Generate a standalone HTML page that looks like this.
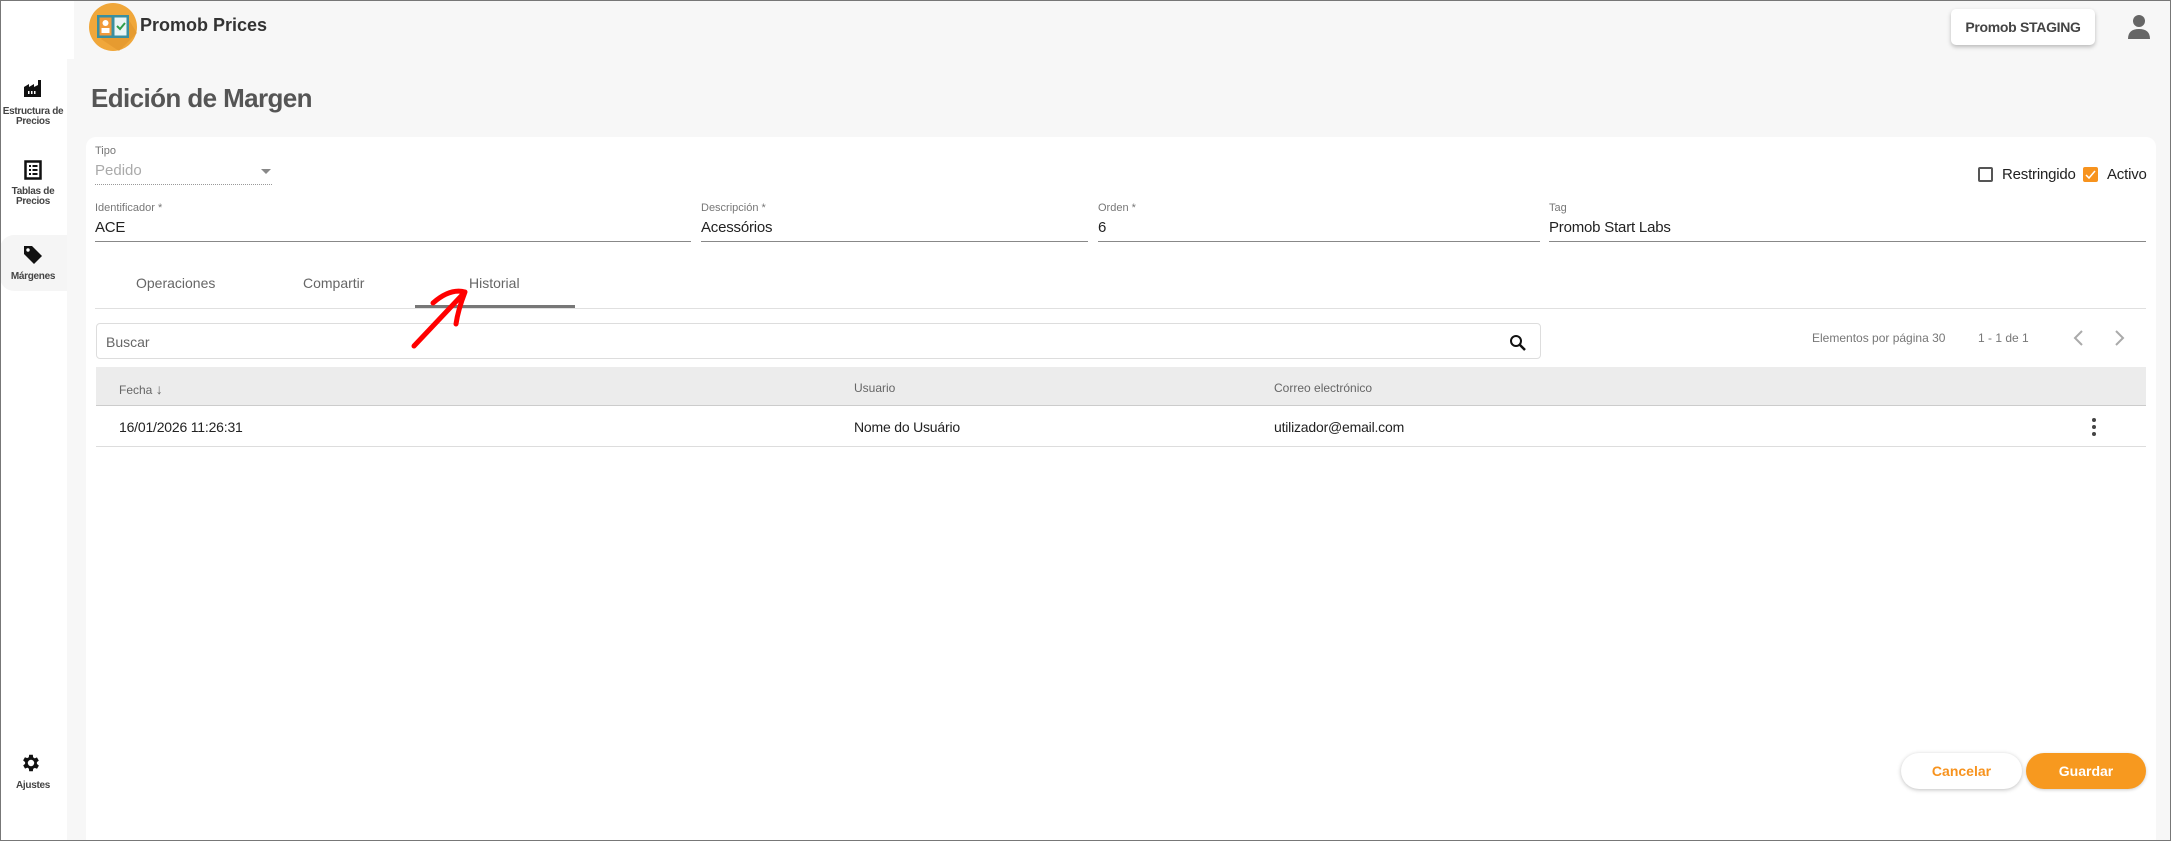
<!DOCTYPE html>
<html><head><meta charset="utf-8"><style>
*{box-sizing:border-box;margin:0;padding:0}
body{width:2171px;height:841px;overflow:hidden;background:#f7f7f7;font-family:"Liberation Sans",Arial,sans-serif;position:relative}
.frame{position:absolute;left:0;top:0;width:2171px;height:841px;border:1px solid #777;z-index:50;pointer-events:none}
.abs{position:absolute}
.side{left:0;top:0;width:67px;height:841px;background:#fff}
.sideTop{left:0;top:0;width:74px;height:59px;background:#fff}
.sl{position:absolute;left:0;width:66px;text-align:center;font-size:10px;font-weight:bold;color:#444;line-height:10px;letter-spacing:-0.3px}
.card{left:86px;top:137px;width:2070px;height:704px;background:#fff;border-radius:10px 10px 0 0}
.lbl{position:absolute;font-size:11px;color:#777}
.val{position:absolute;font-size:15px;color:#222;letter-spacing:-0.2px}
.ul{position:absolute;height:1px;background:#888}
.tab{position:absolute;top:275px;font-size:14px;color:#666}
.th{position:absolute;top:381px;font-size:12px;color:#666}
.td{position:absolute;top:419px;font-size:14px;color:#222;letter-spacing:-0.2px}
</style></head><body>
<div class="frame"></div>
<div class="abs side"></div>
<div class="abs sideTop"></div>
<svg class="abs" style="left:89px;top:3px" width="48" height="48" viewBox="0 0 48 48">
<circle cx="24" cy="24" r="24" fill="#f0a73a"/>
<path d="M12 36 L30 48 L48 30 L38 14 Z" fill="#e0922a" opacity=".6"/>
<rect x="8" y="12" width="32" height="23" fill="#3a8fa0"/>
<rect x="10.5" y="14.5" width="12" height="18" fill="#f29a3a"/>
<rect x="25.5" y="14.5" width="12" height="18" fill="#eaf4f5"/>
<circle cx="16.5" cy="20" r="3" fill="#fff"/>
<rect x="12.5" y="25" width="8" height="5" fill="#fff"/>
<path d="M28 23 l3 3 l5 -6" stroke="#2e9e4a" stroke-width="2" fill="none"/>
</svg>
<div class="abs" style="left:140px;top:15px;font-size:18px;font-weight:bold;color:#333">Promob Prices</div>
<div class="abs" style="left:1951px;top:9px;width:144px;height:36px;background:#fff;border-radius:5px;box-shadow:0 2px 4px rgba(0,0,0,.25);font-size:14px;font-weight:bold;color:#444;text-align:center;line-height:36px;letter-spacing:-0.3px">Promob STAGING</div>
<svg class="abs" style="left:2127px;top:14px" width="24" height="26" viewBox="0 0 24 26"><circle cx="12" cy="7" r="6" fill="#666"/><path d="M1 25 Q1 15 12 15 Q23 15 23 25 Z" fill="#666"/></svg>

<svg class="abs" style="left:23px;top:78px" width="20" height="20" viewBox="0 0 20 20"><path d="M1 19 V9 l5 -3 v3 l5 -3 v3 l4 -2 V2 h3 v17 Z" fill="#111"/><rect x="5" y="13" width="1.5" height="3" fill="#fff"/><rect x="8" y="13" width="1.5" height="3" fill="#fff"/><rect x="11" y="13" width="1.5" height="3" fill="#fff"/></svg>
<div class="sl" style="top:107px">Estructura de<br>Precios</div>
<svg class="abs" style="left:24px;top:160px" width="18" height="20" viewBox="0 0 18 20"><rect x="1.5" y="1.5" width="15" height="17" fill="none" stroke="#111" stroke-width="2.5"/><rect x="5" y="5" width="2" height="2" fill="#111"/><rect x="8.5" y="5" width="5" height="2" fill="#111"/><rect x="5" y="9" width="2" height="2" fill="#111"/><rect x="8.5" y="9" width="5" height="2" fill="#111"/><rect x="5" y="13" width="2" height="2" fill="#111"/><rect x="8.5" y="13" width="5" height="2" fill="#111"/></svg>
<div class="sl" style="top:187px">Tablas de<br>Precios</div>
<div class="abs" style="left:0;top:235px;width:67px;height:56px;background:#f5f5f5;border-radius:14px 0 0 14px"></div>
<svg class="abs" style="left:22px;top:244px" width="22" height="22" viewBox="0 0 22 22"><path d="M2 2 h8 l10 10 l-8 8 l-10 -10 Z" fill="#111"/><circle cx="6" cy="6" r="1.7" fill="#fff"/></svg>
<div class="sl" style="top:272px">Márgenes</div>
<svg class="abs" style="left:20px;top:752px" width="22" height="22" viewBox="0 0 24 24"><path fill="#111" d="M19.4 13a7.5 7.5 0 000-2l2.1-1.6-2-3.5-2.5 1a7 7 0 00-1.7-1L15 3h-4l-.4 2.7a7 7 0 00-1.7 1l-2.5-1-2 3.5L6.6 11a7.5 7.5 0 000 2l-2.1 1.6 2 3.5 2.5-1a7 7 0 001.7 1L11 21h4l.4-2.7a7 7 0 001.7-1l2.5 1 2-3.5zM13 15.5a3.5 3.5 0 110-7 3.5 3.5 0 010 7z" transform="translate(-1 0)"/></svg>
<div class="sl" style="top:781px">Ajustes</div>

<div class="abs" style="left:91px;top:83px;font-size:26px;font-weight:bold;color:#555;letter-spacing:-0.6px">Edición de Margen</div>

<div class="abs card"></div>
<div class="lbl" style="left:95px;top:145px">Tipo</div>
<div class="abs" style="left:95px;top:162px;font-size:15px;color:#aaa">Pedido</div>
<div class="abs" style="left:261px;top:169px;width:0;height:0;border-left:5px solid transparent;border-right:5px solid transparent;border-top:5px solid #888"></div>
<div class="abs" style="left:95px;top:184px;width:177px;border-top:1px dotted #999"></div>

<div class="lbl" style="left:95px;top:202px">Identificador *</div>
<div class="val" style="left:95px;top:219px">ACE</div>
<div class="ul" style="left:95px;top:241px;width:596px"></div>
<div class="lbl" style="left:701px;top:202px">Descripción *</div>
<div class="val" style="left:701px;top:219px">Acessórios</div>
<div class="ul" style="left:701px;top:241px;width:387px"></div>
<div class="lbl" style="left:1098px;top:202px">Orden *</div>
<div class="val" style="left:1098px;top:219px">6</div>
<div class="ul" style="left:1098px;top:241px;width:442px"></div>
<div class="lbl" style="left:1549px;top:202px">Tag</div>
<div class="val" style="left:1549px;top:219px">Promob Start Labs</div>
<div class="ul" style="left:1549px;top:241px;width:597px"></div>

<div class="abs" style="left:1978px;top:167px;width:15px;height:15px;border:2px solid #555;border-radius:2px"></div>
<div class="val" style="left:2002px;top:166px">Restringido</div>
<div class="abs" style="left:2083px;top:167px;width:15px;height:15px;background:#f7931e;border-radius:2px"></div>
<svg class="abs" style="left:2083px;top:167px" width="15" height="15"><path d="M3 8 l3 3 l6 -7" stroke="#fff" stroke-width="1.5" fill="none"/></svg>
<div class="val" style="left:2107px;top:166px">Activo</div>

<div class="tab" style="left:136px">Operaciones</div>
<div class="tab" style="left:303px">Compartir</div>
<div class="tab" style="left:469px">Historial</div>
<div class="abs" style="left:95px;top:308px;width:2051px;height:1px;background:#e0e0e0"></div>
<div class="abs" style="left:415px;top:305px;width:160px;height:3px;background:#777"></div>

<div class="abs" style="left:96px;top:323px;width:1445px;height:36px;border:1px solid #ddd;border-radius:4px"></div>
<div class="abs" style="left:106px;top:334px;font-size:14px;color:#666">Buscar</div>
<svg class="abs" style="left:1509px;top:334px" width="18" height="18" viewBox="0 0 18 18"><circle cx="7" cy="7" r="5" fill="none" stroke="#111" stroke-width="2"/><path d="M11 11 l5 5" stroke="#111" stroke-width="2.5"/></svg>
<div class="abs" style="left:1812px;top:331px;font-size:12px;color:#777">Elementos por página 30</div>
<div class="abs" style="left:1978px;top:331px;font-size:12px;color:#777">1 - 1 de 1</div>
<svg class="abs" style="left:2072px;top:329px" width="14" height="18"><path d="M10 2 L3 9 L10 16" stroke="#aaa" stroke-width="2" fill="none"/></svg>
<svg class="abs" style="left:2112px;top:329px" width="14" height="18"><path d="M4 2 L11 9 L4 16" stroke="#aaa" stroke-width="2" fill="none"/></svg>

<div class="abs" style="left:96px;top:367px;width:2050px;height:39px;background:#ececec;border-bottom:1px solid #ccc"></div>
<div class="th" style="left:119px">Fecha <span style="font-size:14px">↓</span></div>
<div class="th" style="left:854px">Usuario</div>
<div class="th" style="left:1274px">Correo electrónico</div>
<div class="td" style="left:119px">16/01/2026 11:26:31</div>
<div class="td" style="left:854px">Nome do Usuário</div>
<div class="td" style="left:1274px">utilizador@email.com</div>
<svg class="abs" style="left:2090px;top:417px" width="8" height="20"><circle cx="4" cy="3" r="2" fill="#444"/><circle cx="4" cy="10" r="2" fill="#444"/><circle cx="4" cy="17" r="2" fill="#444"/></svg>
<div class="abs" style="left:96px;top:446px;width:2050px;height:1px;background:#ddd"></div>

<svg class="abs" style="left:400px;top:280px" width="90" height="80"><path d="M14 66 L65 12 M33 23 Q50 8 65 12 Q58 30 56 44" stroke="#f00" stroke-width="5" fill="none" stroke-linecap="round" stroke-linejoin="round"/></svg>

<div class="abs" style="left:1901px;top:753px;width:121px;height:36px;background:#fff;border-radius:18px;box-shadow:0 1px 4px rgba(0,0,0,.25);color:#f7931e;font-size:14px;font-weight:bold;text-align:center;line-height:36px">Cancelar</div>
<div class="abs" style="left:2026px;top:753px;width:120px;height:36px;background:#f7991f;border-radius:18px;box-shadow:0 1px 3px rgba(0,0,0,.2);color:#fff;font-size:14px;font-weight:bold;text-align:center;line-height:36px">Guardar</div>
</body></html>
